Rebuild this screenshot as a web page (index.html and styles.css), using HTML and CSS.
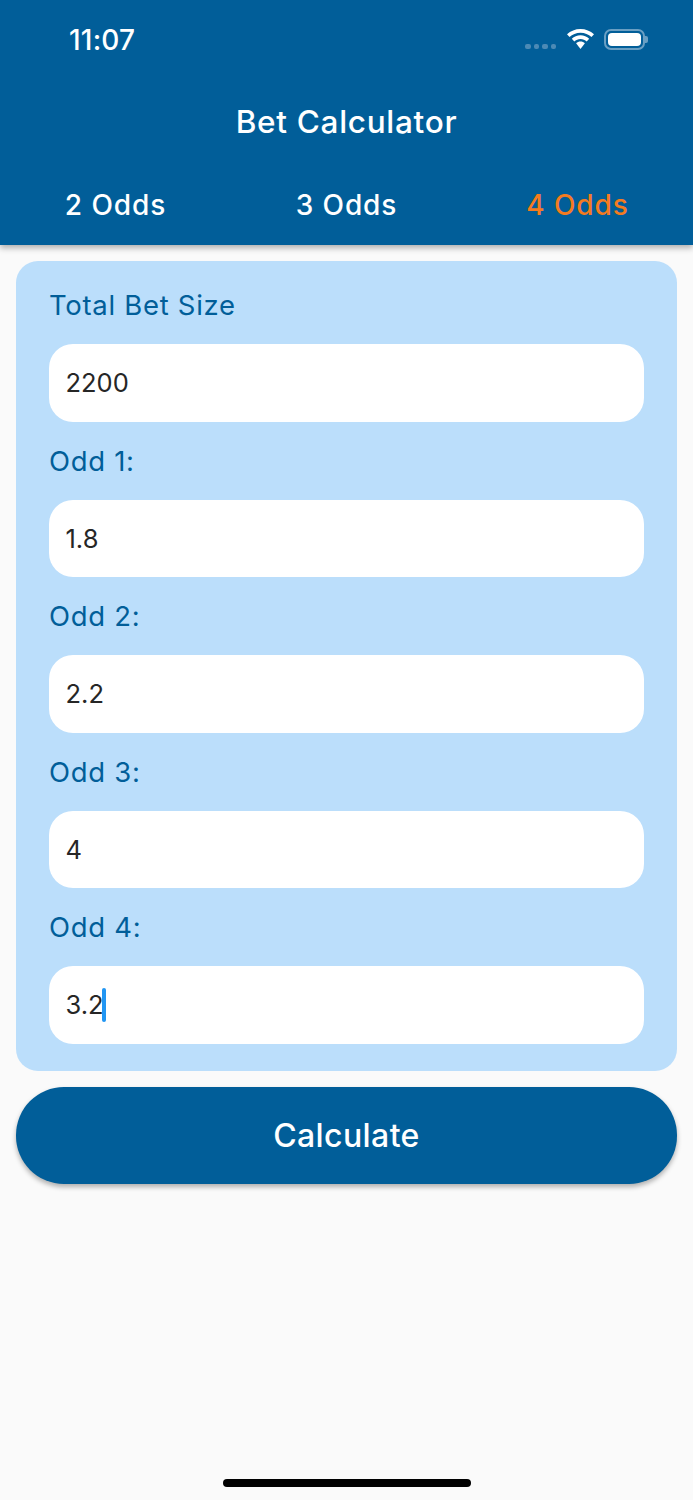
FILE: index.html
```html
<!DOCTYPE html>
<html lang="en">
<head>
    <meta charset="UTF-8">
    <meta name="viewport" content="width=device-width, initial-scale=1.0">
    <title>Bet Calculator</title>
    <link rel="stylesheet" href="styles.css">
</head>
<body>
    <div class="app">
        <header class="app-bar">
            <div class="status-bar">
                <span class="time">11:07</span>
                <div class="status-icons">
                    <div class="signal"><i></i><i></i><i></i><i></i></div>
                    <svg class="wifi" width="27" height="20" viewBox="0 0 27 20">
                        <path d="M13.500 0C8.300 0 3.600 2 0 5.300l2.500 2.700C5.400 5.300 9.200 3.700 13.500 3.700s8.100 1.600 11 4.300L27 5.300C23.400 2 18.700 0 13.500 0z" fill="#fff"/>
                        <path d="M13.500 6.300c-3.300 0-6.400 1.300-8.700 3.400l2.500 2.700c1.600-1.500 3.800-2.400 6.200-2.400s4.600.9 6.200 2.400l2.500-2.700c-2.300-2.100-5.400-3.400-8.700-3.400z" fill="#fff"/>
                        <path d="M13.500 12.600c-1.700 0-3.200.6-4.400 1.700l4.400 5.700 4.400-5.700c-1.200-1.100-2.700-1.700-4.400-1.700z" fill="#fff"/>
                    </svg>
                    <div class="battery"><div class="battery-level"></div></div>
                    <div class="battery-cap"></div>
                </div>
            </div>
            <div class="title">Bet Calculator</div>
            <nav class="tabs">
                <div class="tab">2 Odds</div>
                <div class="tab">3 Odds</div>
                <div class="tab active">4 Odds</div>
            </nav>
        </header>

        <main class="content">
            <div class="card">
                <label class="field-label">Total Bet Size</label>
                <div class="field">2200</div>
                <label class="field-label">Odd 1:</label>
                <div class="field">1.8</div>
                <label class="field-label">Odd 2:</label>
                <div class="field">2.2</div>
                <label class="field-label">Odd 3:</label>
                <div class="field">4</div>
                <label class="field-label">Odd 4:</label>
                <div class="field">3.2<span class="caret"></span></div>
            </div>
            <button class="calculate">Calculate</button>
        </main>

        <div class="home-indicator"></div>
    </div>
</body>
</html>
```

FILE: styles.css
```css
* {
    box-sizing: border-box;
}
body {
    margin: 0;
    font-family: Inter, "Noto Sans", sans-serif;
    background-color: #fafafa;
}
.app {
    width: 693px;
    height: 1500px;
    display: flex;
    flex-direction: column;
    overflow: hidden;
}
.app-bar {
    height: 245px;
    flex-shrink: 0;
    background-color: #015e99;
    color: #fff;
    box-shadow: 0 3px 6px rgba(0, 0, 0, 0.3);
}
.status-bar {
    height: 80px;
    display: flex;
    align-items: center;
    justify-content: space-between;
    padding: 0 45px 0 69px;
}
.time {
    font-size: 28px;
    font-weight: 500;
    letter-spacing: 0.2px;
}
.status-icons {
    display: flex;
    align-items: center;
    margin-top: -2px;
}
.signal {
    display: flex;
    gap: 3px;
    margin: 15px 11px 0 0;
}
.signal i {
    width: 5.500px;
    height: 5px;
    border-radius: 2px;
    background-color: #4c8ab5;
}
.wifi {
    margin-right: 10px;
}
.battery {
    width: 41px;
    height: 21px;
    padding: 2px;
    border: 2px solid #6a9fc3;
    border-radius: 7px;
}
.battery-level {
    height: 100%;
    background-color: #fff;
    border-radius: 4px;
}
.battery-cap {
    width: 3px;
    height: 7px;
    background-color: #6a9fc3;
    border-radius: 0 2px 2px 0;
}
.title {
    height: 83px;
    display: flex;
    align-items: center;
    justify-content: center;
    font-size: 31.500px;
    font-weight: 500;
    letter-spacing: 0.7px;
}
.tabs {
    height: 82px;
    padding-top: 2px;
    display: grid;
    grid-template-columns: repeat(3, 1fr);
}
.tab {
    display: flex;
    align-items: center;
    justify-content: center;
    font-size: 28px;
    font-weight: 500;
    letter-spacing: 0.9px;
}
.tab.active {
    color: #f47b20;
}
.content {
    padding: 16px;
    display: flex;
    flex-direction: column;
    gap: 16px;
    flex: 1;
}
.card {
    height: 810px;
    padding: 5px 33px 0;
    background-color: #bbdefb;
    border-radius: 22px;
}
.field-label {
    height: 78px;
    display: flex;
    align-items: center;
    font-size: 27.500px;
    letter-spacing: 0.7px;
    color: #015e99;
}
.field {
    height: 77.500px;
    padding: 0 16.500px;
    display: flex;
    align-items: center;
    background-color: #fff;
    border-radius: 24px;
    font-size: 25.500px;
    color: #262626;
}
.caret {
    width: 3.500px;
    height: 34px;
    margin-left: -1.500px;
    background-color: #2196f3;
    border-radius: 2px;
}
.calculate {
    height: 97px;
    width: 100%;
    border: none;
    border-radius: 48px;
    background-color: #015e99;
    color: #fff;
    font-family: inherit;
    font-size: 32px;
    font-weight: 500;
    letter-spacing: 0.4px;
    box-shadow: 0 3px 5px rgba(0, 0, 0, 0.3);
}
.home-indicator {
    width: 248px;
    height: 8px;
    margin: 0 auto 13px;
    flex-shrink: 0;
    background-color: #000;
    border-radius: 4px;
}
```
